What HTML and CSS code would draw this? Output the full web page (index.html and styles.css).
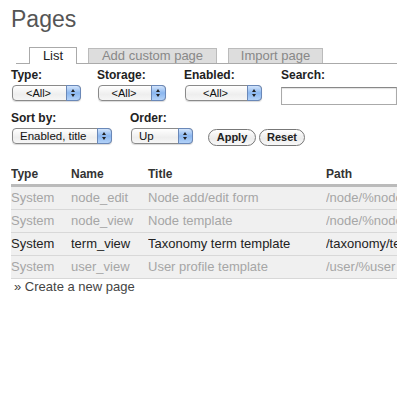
FILE: index.html
```html
<!DOCTYPE html>
<html>
<head>
<meta charset="utf-8">
<link rel="stylesheet" href="styles.css">
</head>
<body>
<div class="page">
  <h1 class="title">Pages</h1>
  <div class="tabs">
    <span class="tab active t1">List</span>
    <span class="tab t2">Add custom page</span>
    <span class="tab t3">Import page</span>
  </div>
  <div class="filters">
    <div class="frow">
      <div class="field f-type">
        <label>Type:</label>
        <div class="select w69"><span>&lt;All&gt;</span><i class="arr"></i></div>
      </div>
      <div class="field f-storage">
        <label>Storage:</label>
        <div class="select w68"><span>&lt;All&gt;</span><i class="arr"></i></div>
      </div>
      <div class="field f-enabled">
        <label>Enabled:</label>
        <div class="select w77"><span>&lt;All&gt;</span><i class="arr"></i></div>
      </div>
      <div class="field f-search">
        <label>Search:</label>
        <div class="input"></div>
      </div>
    </div>
    <div class="frow row2">
      <div class="field f-sort">
        <label>Sort by:</label>
        <div class="select w100"><span class="left">Enabled, title</span><i class="arr"></i></div>
      </div>
      <div class="field f-order">
        <label>Order:</label>
        <div class="select w62"><span class="left">Up</span><i class="arr"></i></div>
      </div>
      <div class="buttons">
        <span class="btn b1">Apply</span><span class="btn b2">Reset</span>
      </div>
    </div>
  </div>
  <div class="tablewrap">
    <table class="list">
      <thead>
        <tr><th class="c1">Type</th><th class="c2">Name</th><th class="c3">Title</th><th class="c4">Path</th></tr>
      </thead>
      <tbody>
        <tr class="off"><td>System</td><td>node_edit</td><td>Node add/edit form</td><td>/node/%node/edit</td></tr>
        <tr class="off"><td>System</td><td>node_view</td><td>Node template</td><td>/node/%node</td></tr>
        <tr class="on"><td>System</td><td>term_view</td><td>Taxonomy term template</td><td>/taxonomy/term/%term</td></tr>
        <tr class="off"><td>System</td><td>user_view</td><td>User profile template</td><td>/user/%user</td></tr>
      </tbody>
    </table>
  </div>
  <div class="create">» Create a new page</div>
</div>
</body>
</html>
```
FILE: styles.css
```css
html, body {
  margin: 0;
  padding: 0;
  background: #fff;
  overflow: hidden;
}
body {
  font-family: "Liberation Sans", Arial, sans-serif;
  color: #222;
  width: 397px;
  height: 396px;
}
.page {
  padding: 0 0 0 11px;
}
.title {
  margin: 0;
  padding-top: 6px;
  font-size: 23px;
  font-weight: normal;
  color: #555;
  line-height: 26px;
  height: 41px;
}
.tabs {
  display: flex;
  align-items: flex-end;
  margin-left: 5px;
  padding-left: 13px;
  border-bottom: 1px solid #aaa;
  height: 16px;
  gap: 11px;
}
.tab {
  display: block;
  box-sizing: border-box;
  white-space: nowrap;
  text-align: center;
  font-size: 13px;
  line-height: 14px;
  border: 1px solid #bbb;
  border-bottom: none;
  background: #ddd;
  color: #888;
  height: 15px;
}
.tab.active {
  background: #fff;
  color: #222;
  border-color: #aaa;
  margin-bottom: -1px;
  height: 17px;
  line-height: 15px;
}
.t1 { width: 48px; }
.t2 { width: 129px; }
.t3 { width: 95px; }

.filters { padding-top: 5px; }
.frow { display: flex; }
.field label {
  display: block;
  font-size: 12px;
  font-weight: bold;
  line-height: 13px;
  height: 16px;
  color: #222;
}
.f-type { width: 86px; }
.f-storage { width: 87px; }
.f-enabled { width: 97px; }
.f-search { flex: 1; }
.select {
  position: relative;
  box-sizing: border-box;
  height: 16px;
  border: 1px solid #8a8a8a;
  border-radius: 4px;
  background: linear-gradient(#fff, #eee 60%, #f6f6f6);
  font-size: 11px;
  line-height: 14px;
  padding-right: 16px;
  margin-left: 1px;
  box-shadow: 0 1px 1px rgba(0,0,0,0.15);
  white-space: nowrap;
}
.select span { display: block; text-align: center; color: #111; }
.select span.left { text-align: left; padding-left: 7px; font-size: 11.5px; }
.select .arr {
  position: absolute;
  right: -1px;
  top: -1px;
  bottom: -1px;
  width: 15px;
  border-radius: 0 4px 4px 0;
  border: 1px solid #6a88b8;
  box-sizing: border-box;
  background: linear-gradient(#d2e4fb, #8ab6ef 50%, #b3d2f8);
}
.select .arr::before, .select .arr::after {
  content: "";
  position: absolute;
  left: 4px;
  border-left: 2.5px solid transparent;
  border-right: 2.5px solid transparent;
}
.select .arr::before { top: 3px; border-bottom: 3px solid #222; }
.select .arr::after { top: 8px; border-top: 3px solid #222; }
.w69 { width: 69px; }
.w68 { width: 68px; }
.w77 { width: 77px; }
.w100 { width: 100px; }
.w62 { width: 62px; }
.input {
  margin-top: 2px;
  height: 16px;
  border: 1px solid #aaa;
  border-top-color: #888;
  box-shadow: inset 0 1px 1px rgba(0,0,0,0.12);
}
.row2 { margin-top: 7px; }
.f-sort { width: 119px; }
.f-order { width: 78px; }
.buttons {
  display: flex;
  gap: 3px;
  padding-top: 17px;
}
.btn {
  display: block;
  box-sizing: border-box;
  height: 17px;
  border: 1px solid #777;
  border-radius: 9px;
  background: linear-gradient(#fff, #ececec 55%, #f8f8f8);
  font-size: 11px;
  font-weight: bold;
  line-height: 15px;
  text-align: center;
  color: #222;
}
.b1 { width: 48px; }
.b2 { width: 46px; }

.tablewrap {
  margin-top: 22px;
  overflow: hidden;
}
.list {
  border-collapse: collapse;
  table-layout: fixed;
  font-size: 13px;
  white-space: nowrap;
  width: 386px;
}
.list th {
  text-align: left;
  font-size: 12px;
  font-weight: bold;
  color: #333;
  padding: 0 0 3px 0;
  line-height: 13px;
  border-bottom: 3px solid #bbb;
}
.c1 { width: 60px; }
.c2 { width: 77px; }
.c3 { width: 178px; }
.list td {
  padding: 0;
  height: 22px;
  line-height: 22px;
  background: #f0f0f0;
  border-bottom: 1px solid #d8d8d8;
  overflow: hidden;
}
.list tr.off td { color: #a6a6a6; }
.list tr.on td { color: #222; }
.create {
  font-size: 13px;
  color: #444;
  padding: 0 0 0 3px;
  line-height: 16px;
}
```
